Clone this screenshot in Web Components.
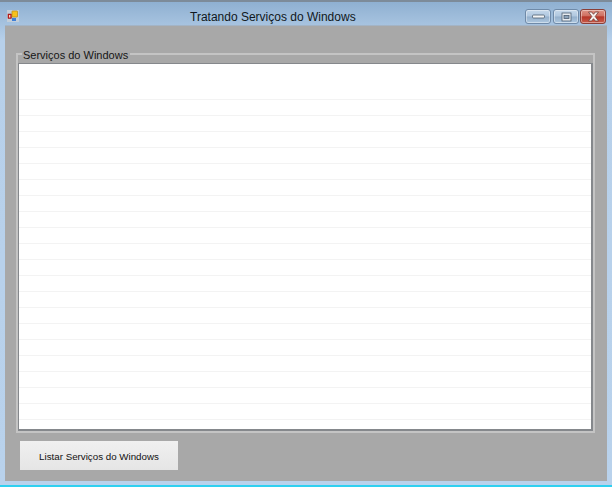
<!DOCTYPE html>
<html>
<head>
<meta charset="utf-8">
<title>Tratando Serviços do Windows</title>
<style>
html, body { margin: 0; padding: 0; height: 100%; overflow: hidden; }
body { font-family: "Liberation Sans", Arial, sans-serif; }
</style>
</head>
<body>
<win-form caption="Tratando Serviços do Windows">
    <group-box legend="Serviços do Windows">
        <list-box rows="21"></list-box>
    </group-box>
    <flat-button>Listar Serviços do Windows</flat-button>
</win-form>
<script>
"use strict";
class CaptionButtons extends HTMLElement {
    constructor() {
        super();
        this.attachShadow({ mode: 'open' });
    }
    connectedCallback() {
        this.shadowRoot.innerHTML = `
            <style>
                :host {
                    display: flex;
                    gap: 2px;
                    margin-top: 7px;
                    align-self: flex-start;
                }
                .btn {
                    width: 24px;
                    height: 13px;
                    border: 1px solid #6f8aa8;
                    border-radius: 3px;
                    box-shadow: inset 0 0 0 1px rgba(255,255,255,.4);
                    background: linear-gradient(#c6d8ea 0%, #afc7df 48%, #94afcb 52%, #aec8e0 100%);
                    display: flex;
                    align-items: center;
                    justify-content: center;
                }
                .close {
                    margin-left: -1px;
                    border-color: #8a3f38;
                    background: linear-gradient(#dd9486 0%, #cf6f60 46%, #b53527 52%, #c95c4b 100%);
                }
                svg { display: block; }
            </style>
            <div class="btn">
                <svg width="13" height="5" viewBox="0 0 13 5"><rect x=".5" y="1" width="12" height="3" rx="1" fill="#f4f5f6" stroke="#4d5e70" stroke-width=".8"/></svg>
            </div>
            <div class="btn">
                <svg width="11" height="10" viewBox="0 0 11 10"><rect x="1" y="1" width="9" height="8" fill="#e6ebf0" stroke="#4d5e70" stroke-width=".8"/><rect x="3" y="3.500" width="5" height="3" fill="#8da3ba" stroke="#4d5e70" stroke-width=".8"/></svg>
            </div>
            <div class="btn close">
                <svg width="13" height="11" viewBox="0 0 13 11"><path d="M1.500 1h3.200L6.500 3.300 8.300 1h3.200L8.200 5.500 11.500 10H8.300L6.500 7.700 4.700 10H1.500L4.800 5.500z" fill="#f6f1ee" stroke="#6e3a36" stroke-width=".8"/></svg>
            </div>
        `;
    }
}
customElements.define('caption-buttons', CaptionButtons);

class WinForm extends HTMLElement {
    constructor() {
        super();
        this.attachShadow({ mode: 'open' });
    }
    connectedCallback() {
        this.shadowRoot.innerHTML = `
            <style>
                :host {
                    display: flex;
                    flex-direction: column;
                    box-sizing: border-box;
                    width: 612px;
                    height: 487px;
                    background: linear-gradient(#8fb0d1 0%, #b7d0ea 8%, #b9d2ec 100%);
                    border-top: 2px solid #7d8b99;
                    border-bottom: 2px solid #2fd0f0;
                }
                .bar {
                    display: flex;
                    flex: none;
                    height: 24px;
                    padding: 0 6px 0 7px;
                }
                .icon { margin-top: 8px; flex: none; background: #c3ced9; }
                .title {
                    flex: 1;
                    padding: 7px 0 0 171px;
                    font-size: 12px;
                    line-height: 17px;
                    color: #101820;
                }
                .client {
                    flex: 1;
                    margin: 0 5px 4px 5px;
                    background: #a8a8a8;
                    padding: 27px 11px 0 11px;
                    display: flex;
                    flex-direction: column;
                    align-items: flex-start;
                    box-shadow: 0 -1px 0 #a3b4c6;
                }
            </style>
            <div class="bar">
                <svg class="icon" width="12" height="12" viewBox="0 0 12 12">
                    <rect x="1" y="4" width="3.500" height="4.500" fill="#c81e1e" stroke="#8d1010" stroke-width=".5"/>
                    <rect x="2" y="5" width="1.300" height="2.500" fill="#f3d6c8"/>
                    <rect x="5" y="1" width="5.500" height="6" rx=".5" fill="#f7c11e" stroke="#b98a10" stroke-width=".7"/>
                    <rect x="5" y="8" width="4" height="3" fill="#3f80d8"/>
                </svg>
                <div class="title">${this.getAttribute('caption')}</div>
                <caption-buttons></caption-buttons>
            </div>
            <div class="client"><slot></slot></div>
        `;
    }
}
customElements.define('win-form', WinForm);

class GroupBox extends HTMLElement {
    constructor() {
        super();
        this.attachShadow({ mode: 'open' });
    }
    connectedCallback() {
        this.shadowRoot.innerHTML = `
            <style>
                :host {
                    display: block;
                    box-sizing: border-box;
                    width: 579px;
                    height: 380px;
                    border: 2px solid #c4c4c4;
                    padding: 8px 0 0 0;
                    position: relative;
                }
                .legend {
                    position: absolute;
                    left: 4px;
                    top: -6px;
                    padding: 0 2px 0 1px;
                    background: #a8a8a8;
                    font-size: 11px;
                    line-height: 13px;
                    color: #161616;
                }
            </style>
            <div class="legend">${this.getAttribute('legend')}</div>
            <slot></slot>
        `;
    }
}
customElements.define('group-box', GroupBox);

class ListBox extends HTMLElement {
    constructor() {
        super();
        this.attachShadow({ mode: 'open' });
    }
    connectedCallback() {
        const rows = parseInt(this.getAttribute('rows'), 10);
        this.shadowRoot.innerHTML = `
            <style>
                :host {
                    display: block;
                    box-sizing: border-box;
                    height: 368px;
                    background: #fff;
                    border-bottom: 2px solid #85888c;
                    border-right: 2px solid #85888c;
                    border-top: 1px solid #85888c;
                    border-left: 1px solid #85888c;
                    overflow: hidden;
                }
                .row {
                    height: 16px;
                    box-sizing: border-box;
                    border-bottom: 1px solid #f3f3f3;
                }
                .row.first { height: 36px; }
            </style>
            ${Array.from({ length: rows }, (_, i) => `<div class="row${i === 0 ? ' first' : ''}"></div>`).join('')}
        `;
    }
}
customElements.define('list-box', ListBox);

class FlatButton extends HTMLElement {
    constructor() {
        super();
        this.attachShadow({ mode: 'open' });
    }
    connectedCallback() {
        this.shadowRoot.innerHTML = `
            <style>
                :host {
                    display: flex;
                    align-items: center;
                    justify-content: center;
                    box-sizing: border-box;
                    width: 158px;
                    height: 29px;
                    padding-top: 2px;
                    margin: 8px 0 0 4px;
                    background: linear-gradient(#f0f0f0, #e5e5e5);
                    font-size: 9.75px;
                    color: #111;
                }
            </style>
            <slot></slot>
        `;
    }
}
customElements.define('flat-button', FlatButton);
</script>
</body>
</html>
